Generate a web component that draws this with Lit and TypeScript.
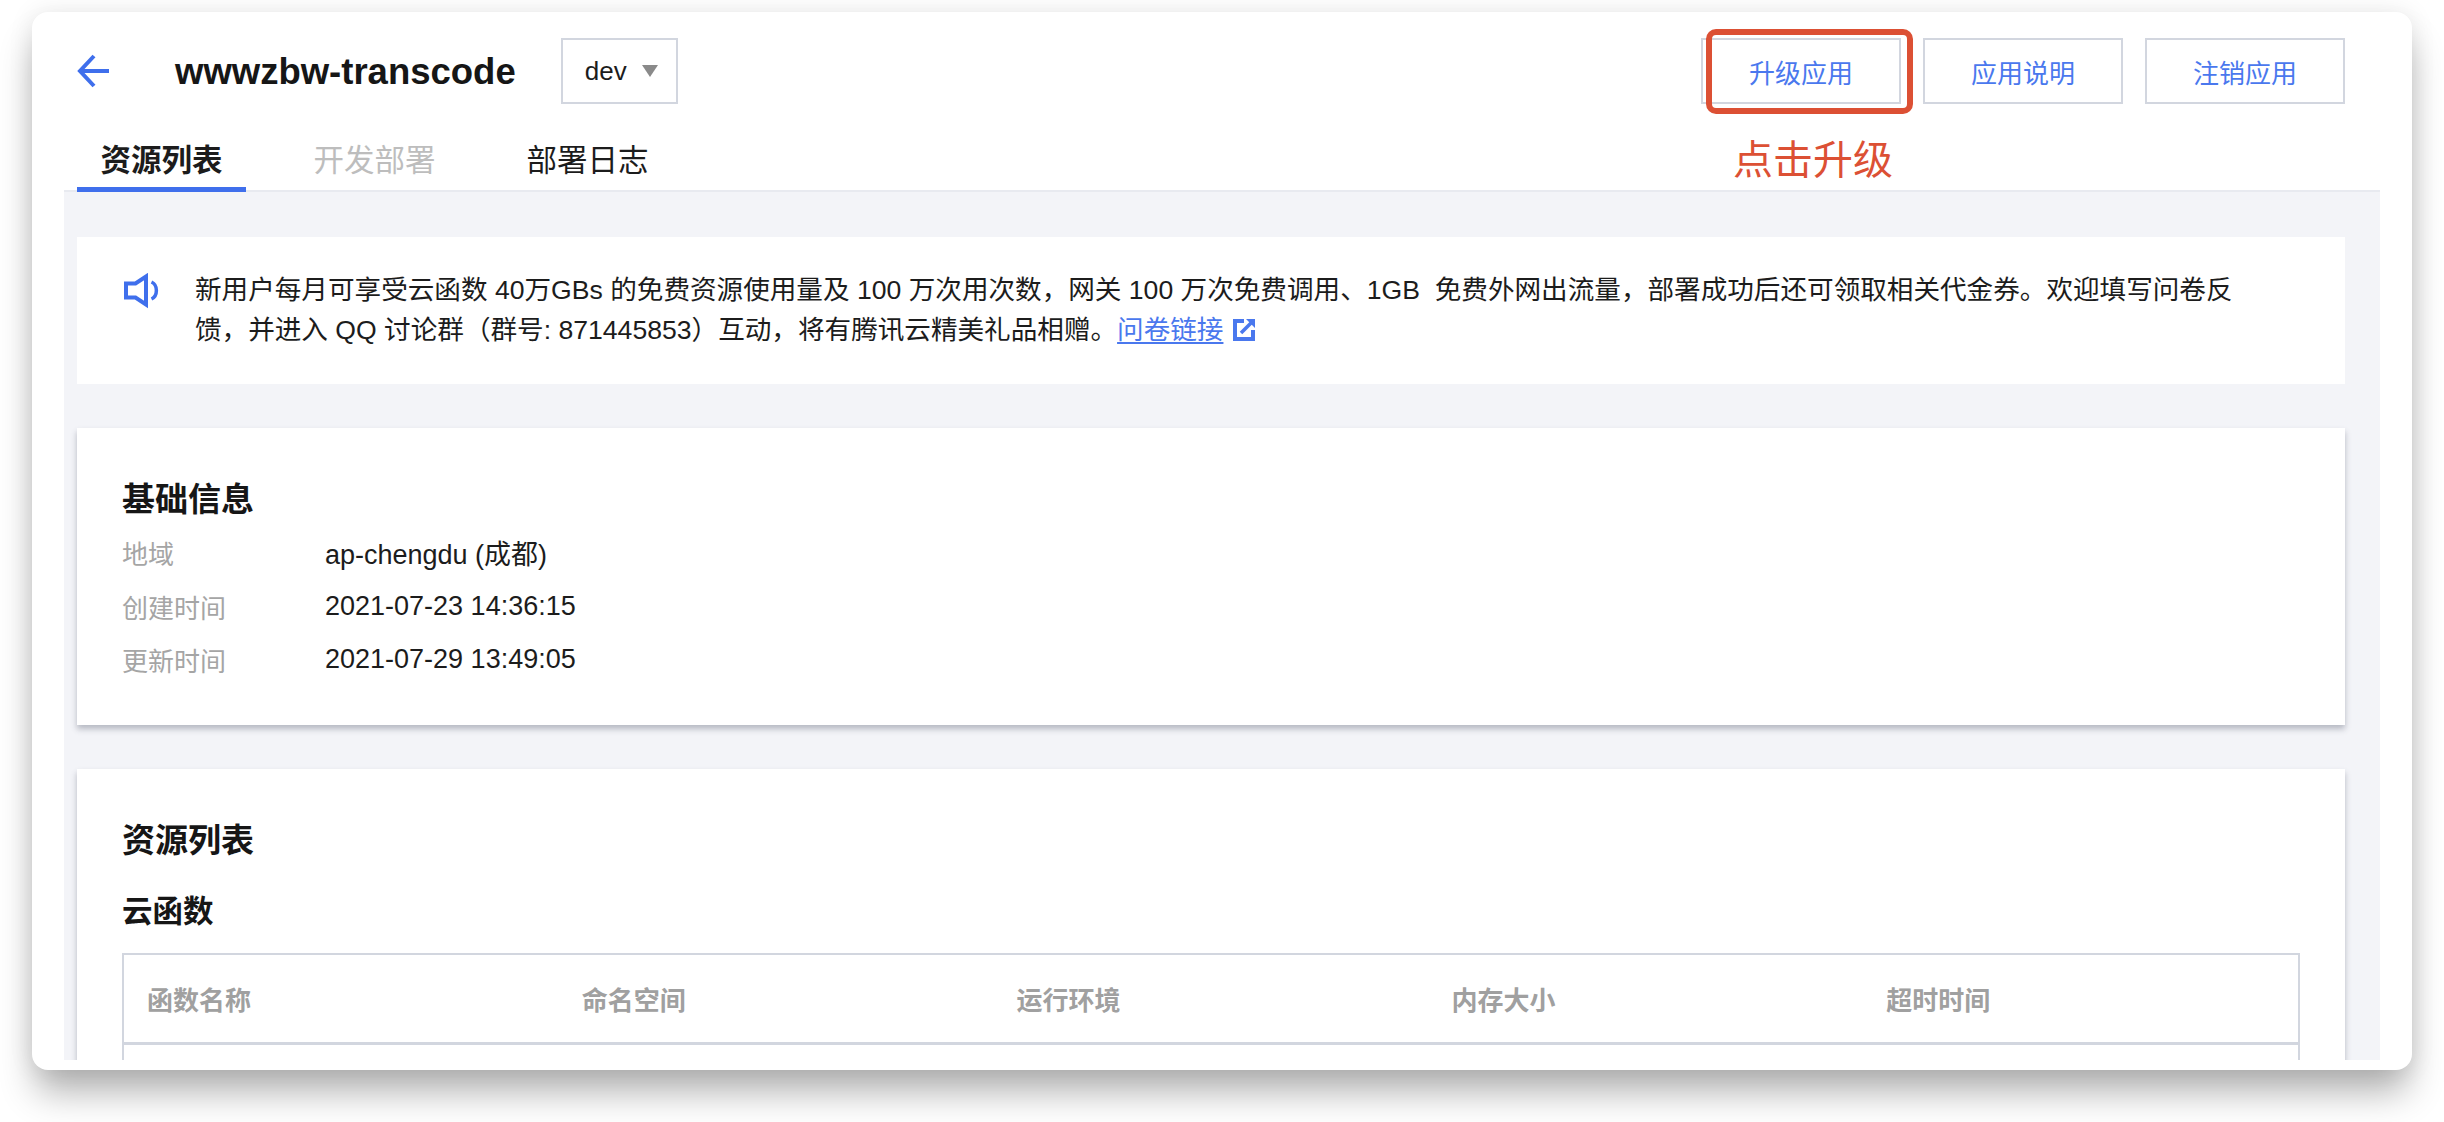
import { LitElement, html, css } from "lit";
import { customElement } from "lit/decorators.js";

@customElement("app-root")
export class AppRoot extends LitElement {
  static styles = css`
    :host {
      display: block;
      height: 1122px;
      overflow: hidden;
      background: #fff;
      font-family: "Liberation Sans", "Noto Sans CJK SC", sans-serif;
      color: #1c1c1c;
      font-size: 26px;
      padding: 12px 32px 0;
      box-sizing: border-box;
    }
    * { box-sizing: border-box; }
    .window {
      position: relative;
      height: 1058px;
      background: #fff;
      border-radius: 16px;
      box-shadow: 0 26px 36px -4px rgba(0, 0, 0, 0.3), 0 0 26px rgba(0, 0, 0, 0.09);
      display: flex;
      flex-direction: column;
      padding: 0 32px 10px;
    }
    .head {
      display: flex;
      align-items: center;
      height: 66px;
      margin-top: 26px;
      padding: 0 35px 0 13px;
      flex: none;
    }
    .back { width: 33px; height: 34px; flex: none; display: block; }
    .title {
      font-size: 36.5px;
      font-weight: 700;
      margin-left: 65px;
      padding-top: 2px;
      color: #161616;
      white-space: nowrap;
    }
    .select {
      margin-left: 45px;
      width: 117px;
      height: 66px;
      border: 2px solid #d2d6df;
      display: flex;
      align-items: center;
      padding-left: 22px;
      gap: 15px;
      font-size: 26px;
    }
    .tri {
      width: 0;
      height: 0;
      border-left: 8.5px solid transparent;
      border-right: 8.5px solid transparent;
      border-top: 12px solid #8a8a8a;
    }
    .actions { margin-left: auto; display: flex; gap: 22px; }
    .btn {
      width: 200px;
      height: 66px;
      border: 2px solid #d2d6df;
      background: #fff;
      display: flex;
      align-items: center;
      justify-content: center;
      color: #4a78ee;
      font-size: 26px;
    }
    .tabs {
      display: flex;
      gap: 44px;
      height: 88px;
      padding: 22px 0 0 13px;
      flex: none;
      border-bottom: 2px solid #e8eaf0;
    }
    .tab {
      width: 169px;
      height: 66px;
      margin-bottom: -2px;
      padding-top: 12px;
      display: flex;
      align-items: flex-start;
      justify-content: center;
      font-size: 30.5px;
      line-height: 44px;
      border-bottom: 5px solid transparent;
      color: #1c1c1c;
    }
    .tab.on { font-weight: 700; border-bottom-color: #3f6fec; }
    .tab.off { color: #bdbdbd; }
    .main {
      flex: 1;
      min-height: 0;
      overflow: hidden;
      background: #f3f4f8;
      padding: 45px 35px 0 13px;
      display: flex;
      flex-direction: column;
    }
    .notice {
      flex: none;
      height: 147px;
      background: #fff;
      display: flex;
      padding: 33px 45px 0 47px;
      line-height: 40px;
      font-size: 26.6px;
      margin-bottom: 44px;
    }
    .speaker { width: 36px; height: 36px; flex: none; margin: 3px 35px 0 0; display: block; }
    .line { white-space: nowrap; }
    a {
      color: #4a78ee;
      text-decoration: underline;
      text-underline-offset: 3px;
    }
    .ext { display: inline-block; width: 22px; height: 22px; margin-left: 10px; vertical-align: -2px; }
    .card {
      flex: none;
      background: #fff;
      box-shadow: 0 4px 6px rgba(54, 58, 80, 0.32);
      padding: 0 45px;
    }
    .info { height: 297px; padding-top: 50px; margin-bottom: 44px; }
    h2 {
      margin: 0;
      font-size: 33px;
      line-height: 44px;
      font-weight: 700;
      color: #161616;
    }
    .rows {
      display: grid;
      grid-template-columns: 203px 1fr;
      grid-auto-rows: 53.5px;
      align-items: center;
      margin-top: 4px;
    }
    .k { color: #a5a5a5; }
    .v { color: #1c1c1c; font-size: 27px; }
    .res { padding-top: 50px; height: 400px; }
    h3 {
      margin: 26px 0 20px;
      font-size: 30.5px;
      line-height: 44px;
      font-weight: 700;
      color: #161616;
    }
    .table {
      border: 2px solid #d2d6df;
      height: 200px;
    }
    .thead {
      display: grid;
      grid-template-columns: repeat(5, 1fr);
      height: 90px;
      border-bottom: 3px solid #d2d6df;
      align-items: center;
    }
    .thead div { padding-left: 23px; color: #a0a0a0; font-weight: 700; font-size: 26px; }
    .mark {
      position: absolute;
      left: 1674px;
      top: 17px;
      width: 207px;
      height: 85px;
      border: 6px solid #dc5034;
      border-radius: 10px;
      pointer-events: none;
    }
    .note {
      position: absolute;
      left: 1701px;
      top: 123px;
      font-size: 40px;
      line-height: 50px;
      color: #dc5034;
      white-space: nowrap;
    }
  `;

  render() {
    return html`
      <div class="window">
        <div class="head">
          <svg class="back" viewBox="0 0 33 34" fill="none" stroke="#3f6fec" stroke-width="4">
            <path d="M17 2 L3 17 L17 32 M3 17 H32" />
          </svg>
          <div class="title">wwwzbw-transcode</div>
          <div class="select"><span>dev</span><i class="tri"></i></div>
          <div class="actions">
            <div class="btn">升级应用</div>
            <div class="btn">应用说明</div>
            <div class="btn">注销应用</div>
          </div>
        </div>
        <div class="tabs">
          <div class="tab on">资源列表</div>
          <div class="tab off">开发部署</div>
          <div class="tab">部署日志</div>
        </div>
        <div class="main">
          <div class="notice">
            <svg class="speaker" viewBox="0 0 36 36" fill="none" stroke="#3f6fec" stroke-width="4">
              <path d="M2 10.5 H11.5 L22 3.5 V31.5 L11.5 24.5 H2 Z" />
              <path d="M27.5 9 C34 12 34 23 27.5 26" stroke-width="3.5" />
            </svg>
            <div>
              <div class="line">新用户每月可享受云函数 40万GBs 的免费资源使用量及 100 万次用次数，网关 100 万次免费调用、1GB&nbsp; 免费外网出流量，部署成功后还可领取相关代金券。欢迎填写问卷反</div>
              <div class="line">馈，并进入 QQ 讨论群（群号: 871445853）互动，将有腾讯云精美礼品相赠。<a>问卷链接</a><svg class="ext" viewBox="0 0 22 22">
                  <path fill="#4a78ee" d="M0 0 H11 V4 H4 V18 H18 V11 H22 V22 H0 Z" />
                  <path fill="#4a78ee" d="M13 0 H22 V9 Z" />
                  <path stroke="#4a78ee" stroke-width="3.6" fill="none" d="M18 4 L8 14" />
                </svg></div>
            </div>
          </div>
          <div class="card info">
            <h2>基础信息</h2>
            <div class="rows">
              <div class="k">地域</div><div class="v">ap-chengdu (成都)</div>
              <div class="k">创建时间</div><div class="v">2021-07-23 14:36:15</div>
              <div class="k">更新时间</div><div class="v">2021-07-29 13:49:05</div>
            </div>
          </div>
          <div class="card res">
            <h2>资源列表</h2>
            <h3>云函数</h3>
            <div class="table">
              <div class="thead">
                <div>函数名称</div><div>命名空间</div><div>运行环境</div><div>内存大小</div><div>超时时间</div>
              </div>
            </div>
          </div>
        </div>
        <div class="mark"></div>
        <div class="note">点击升级</div>
      </div>
    `;
  }
}
